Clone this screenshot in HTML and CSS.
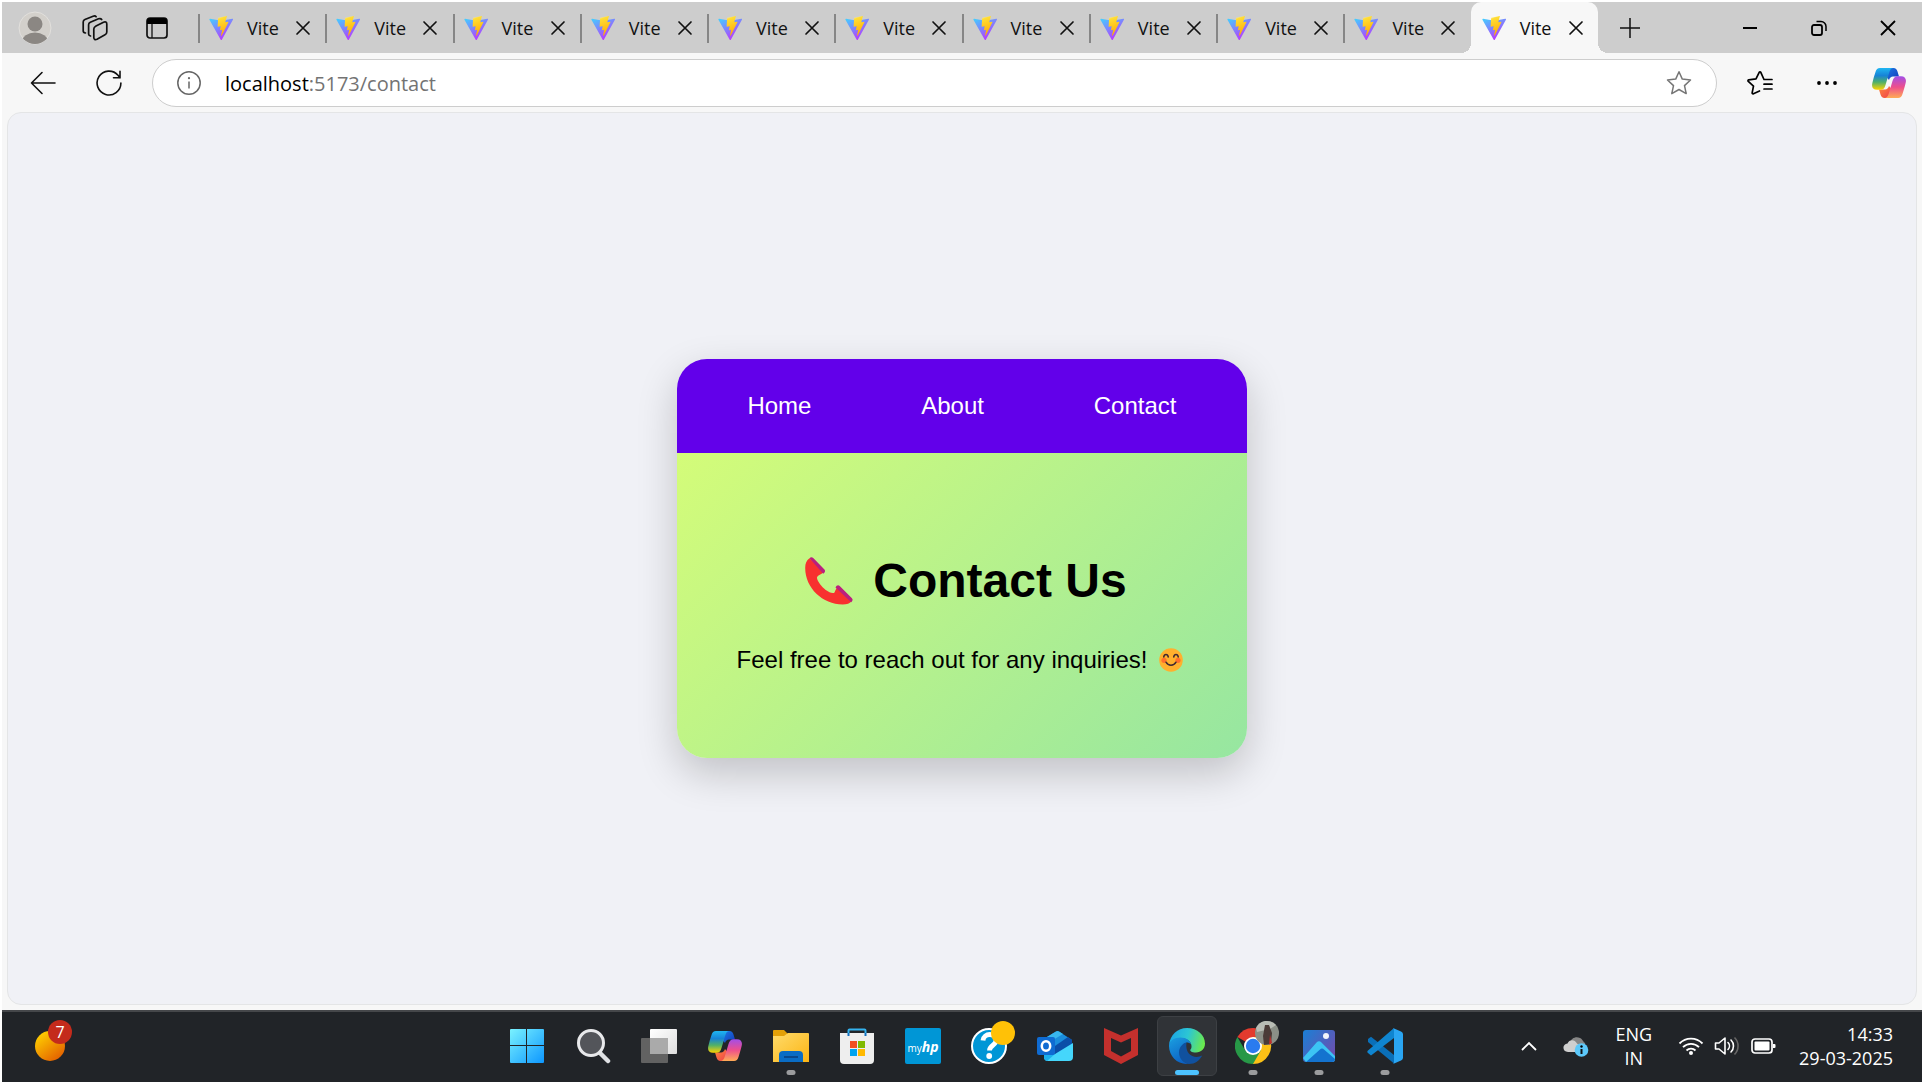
FILE: index.html
```html
<!DOCTYPE html>
<html lang="en">
<head>
<meta charset="utf-8">
<title>Vite + React</title>
<link rel="stylesheet" href="styles.css">
</head>
<body>
<svg class="defs" aria-hidden="true">
  <defs>
    <linearGradient id="viteA" x1="0" y1="0" x2="0.6" y2="1"><stop offset="0" stop-color="#41d1ff"/><stop offset="1" stop-color="#bd34fe"/></linearGradient>
    <linearGradient id="viteB" x1="0.4" y1="0" x2="0.6" y2="1"><stop offset="0" stop-color="#ffea83"/><stop offset="0.1" stop-color="#ffdd35"/><stop offset="1" stop-color="#ffa800"/></linearGradient>
    <linearGradient id="copA" x1="0" y1="0" x2="0" y2="1"><stop offset="0" stop-color="#1fb6f2"/><stop offset="0.35" stop-color="#1783d6"/><stop offset="0.65" stop-color="#4fb069"/><stop offset="1" stop-color="#ffd400"/></linearGradient>
    <linearGradient id="copB" x1="0" y1="0" x2="0" y2="1"><stop offset="0" stop-color="#a24ee8"/><stop offset="0.5" stop-color="#ee4f8c"/><stop offset="1" stop-color="#ffac55"/></linearGradient>
    <linearGradient id="copC" x1="0" y1="0" x2="1" y2="1"><stop offset="0" stop-color="#1d7be6"/><stop offset="1" stop-color="#1238b8"/></linearGradient>
    <linearGradient id="copD" x1="0" y1="0" x2="1" y2="1"><stop offset="0" stop-color="#ff8a3c"/><stop offset="1" stop-color="#ee3f4a"/></linearGradient>
    <symbol id="vite" viewBox="0 0 32 32">
      <path fill="url(#viteA)" d="M31.9 5.1 17.1 31.5c-.3.6-1.1.6-1.5 0L.6 5.1C.2 4.5.8 3.700 1.500 3.800l14.800 2.600h.3L31 3.800c.8-.1 1.300.6.9 1.300z"/>
      <path fill="url(#viteB)" d="m23.500.100-10.900 2.100c-.2 0-.3.200-.4.400l-.7 11.300c0 .300.200.500.500.400l3-.700c.300-.1.600.200.500.500l-.9 4.400c-.1.300.2.600.5.500l1.900-.6c.3-.1.600.200.500.500l-1.400 6.900c-.1.400.500.700.700.300l.2-.2 8.900-17.700c.1-.3-.1-.600-.5-.600l-3.100.6c-.3.100-.5-.2-.5-.5l2-7.100c.1-.300-.1-.600-.5-.500z"/>
    </symbol>
    <symbol id="copilot" viewBox="0 0 34 30">
      <path fill="url(#copC)" d="M17 0h4.500c2.200 0 3.300 1.200 4 3.500L27 8.500h-6c-2 0-3.300 1.200-4 3.500L14.500 9z"/>
      <path fill="url(#copD)" d="M17 30h-4.500c-2.200 0-3.300-1.200-4-3.500L7 21.500h6c2 0 3.300-1.200 4-3.500l2.500 3z"/>
      <path fill="url(#copA)" d="M8 0h13.500c-2.200 0-3.400 1.500-4.200 4.200L13.500 17c-1 3.300-2.300 4.800-5.200 4.800H5c-4 0-5.600-2.600-4.700-6.600C1.300 11 2.300 7.500 3.500 4 4.300 1.300 5.500 0 8 0z"/>
      <path fill="url(#copB)" d="M26 30H12.500c2.200 0 3.400-1.500 4.200-4.200L20.500 13c1-3.300 2.300-4.800 5.200-4.800H29c4 0 5.600 2.600 4.700 6.600-1 4.200-2 7.700-3.200 11.200-.8 2.700-2 4-4.500 4z"/>
    </symbol>
    <symbol id="cross" viewBox="0 0 16 16"><path fill="none" stroke="currentColor" stroke-width="1.700" stroke-linecap="round" d="M2 2l12 12M14 2 2 14"/></symbol>
  </defs>
</svg>

<header class="tabstrip">
  <div class="tools">
    <button class="plain" aria-label="Profile"><svg width="34" height="34" viewBox="0 0 34 34"><defs><clipPath id="av"><circle cx="17" cy="17" r="16"/></clipPath></defs><circle cx="17" cy="17" r="16" fill="#d3d0cb" stroke="#e2e0dd"/><g fill="#8b8783" clip-path="url(#av)"><circle cx="17" cy="13" r="7.500"/><ellipse cx="17" cy="31" rx="13" ry="9.500"/></g></svg></button>
    <button class="plain" aria-label="Workspaces"><svg width="26" height="26" viewBox="0 0 26 26" fill="none" stroke="#111" stroke-width="1.700" stroke-linecap="round" stroke-linejoin="round"><path d="M14 11l7.500-3.800c1.800-.8 3.300-.1 3.300 1.700V17c0 1.400-.6 2.200-1.800 2.800l-8 4.400c-1.900.9-3.200.2-3.200-1.600V14c0-1.500.8-2.200 2.200-3z"/><path d="M8.500 21c-1.300-.3-1.900-.9-1.900-2V9.800c0-1.300.6-2 1.700-2.500l8.200-3.500c1.300-.5 2.500-.3 3.200.7"/><path d="M3.500 18c-1.500-.2-2.300-.9-2.300-2V7c0-1.300.6-2 1.700-2.500l8.200-3.300c1.300-.5 2.500-.2 3 .5"/></svg></button>
    <button class="plain" aria-label="Tab actions"><svg width="22" height="22" viewBox="0 0 22 22"><rect x="1" y="1" width="20" height="20" rx="3" fill="none" stroke="#111" stroke-width="1.700"/><path d="M1 7V4a3 3 0 0 1 3-3h14a3 3 0 0 1 3 3v3z"/><path d="M6 7v14" stroke="#111" stroke-width="1.300"/></svg></button>
  </div>
  <div class="tabs" role="tablist">
    <div class="tab"><svg class="fav"><use href="#vite"/></svg><span>Vite</span><button class="plain" aria-label="Close tab"><svg class="x"><use href="#cross"/></svg></button></div>
    <div class="tab"><svg class="fav"><use href="#vite"/></svg><span>Vite</span><button class="plain" aria-label="Close tab"><svg class="x"><use href="#cross"/></svg></button></div>
    <div class="tab"><svg class="fav"><use href="#vite"/></svg><span>Vite</span><button class="plain" aria-label="Close tab"><svg class="x"><use href="#cross"/></svg></button></div>
    <div class="tab"><svg class="fav"><use href="#vite"/></svg><span>Vite</span><button class="plain" aria-label="Close tab"><svg class="x"><use href="#cross"/></svg></button></div>
    <div class="tab"><svg class="fav"><use href="#vite"/></svg><span>Vite</span><button class="plain" aria-label="Close tab"><svg class="x"><use href="#cross"/></svg></button></div>
    <div class="tab"><svg class="fav"><use href="#vite"/></svg><span>Vite</span><button class="plain" aria-label="Close tab"><svg class="x"><use href="#cross"/></svg></button></div>
    <div class="tab"><svg class="fav"><use href="#vite"/></svg><span>Vite</span><button class="plain" aria-label="Close tab"><svg class="x"><use href="#cross"/></svg></button></div>
    <div class="tab"><svg class="fav"><use href="#vite"/></svg><span>Vite</span><button class="plain" aria-label="Close tab"><svg class="x"><use href="#cross"/></svg></button></div>
    <div class="tab"><svg class="fav"><use href="#vite"/></svg><span>Vite</span><button class="plain" aria-label="Close tab"><svg class="x"><use href="#cross"/></svg></button></div>
    <div class="tab"><svg class="fav"><use href="#vite"/></svg><span>Vite</span><button class="plain" aria-label="Close tab"><svg class="x"><use href="#cross"/></svg></button></div>
    <div class="tab active"><svg class="fav"><use href="#vite"/></svg><span>Vite</span><button class="plain" aria-label="Close tab"><svg class="x"><use href="#cross"/></svg></button></div>
  </div>
  <button class="plain newtab" aria-label="New tab"><svg width="22" height="22" viewBox="0 0 22 22"><path d="M11 1v20M1 11h20" stroke="#111" stroke-width="1.500"/></svg></button>
  <div class="window-controls">
    <button class="plain" aria-label="Minimize"><svg width="16" height="16" viewBox="0 0 16 16"><path d="M1 8h14" stroke="#000" stroke-width="2"/></svg></button>
    <button class="plain" aria-label="Restore"><svg width="16" height="16" viewBox="0 0 16 16" fill="none" stroke="#000" stroke-width="1.800"><rect x="1" y="5" width="10" height="10" rx="2"/><path d="M5.500 1.500H10a5 5 0 0 1 5 5V11" stroke-width="1.500"/></svg></button>
    <button class="plain" aria-label="Close"><svg width="16" height="16" viewBox="0 0 16 16"><path d="M1 1l14 14M15 1 1 15" stroke="#000" stroke-width="1.800"/></svg></button>
  </div>
</header>

<div class="toolbar">
  <button class="plain back" aria-label="Back"><svg width="26" height="24" viewBox="0 0 26 24" fill="none" stroke="#111" stroke-width="1.600" stroke-linecap="round" stroke-linejoin="round"><path d="M25 12H1.500M12 1.500 1.500 12 12 22.500"/></svg></button>
  <button class="plain" aria-label="Refresh"><svg width="26" height="26" viewBox="0 0 26 26" fill="none" stroke="#111" stroke-width="1.600" stroke-linecap="round" stroke-linejoin="round"><path d="M24.900 13A11.900 11.900 0 1 1 22 5.200l2 2.600M24 1.200v6.600h-6.500"/></svg></button>
  <div class="address">
    <svg width="24" height="24" viewBox="0 0 24 24"><circle cx="12" cy="12" r="11.200" fill="none" stroke="#666" stroke-width="1.500"/><path d="M12 10.500V17.500" stroke="#666" stroke-width="1.500"/><circle cx="12" cy="7.200" r="1.100" fill="#666"/></svg>
    <a class="url" href="#">localhost<span>:5173/contact</span></a>
    <button class="plain" aria-label="Add to favorites"><svg width="26" height="26" viewBox="0 0 26 26" fill="none" stroke="#767676" stroke-width="1.500" stroke-linejoin="round"><path d="M13 1.800l3.300 7.300 8.200.9-6 5.600 1.700 8L13 19.500l-7.200 4.100 1.700-8-6-5.600 8.200-.9z"/></svg></button>
  </div>
  <div class="actions">
    <button class="plain" aria-label="Favorites"><svg width="26" height="24" viewBox="0 0 26 24" fill="none" stroke="#000" stroke-width="1.700" stroke-linejoin="round" stroke-linecap="round"><path d="M25 8.500h-8L13.800 1.300a1 1 0 0 0-1.600 0L9 7.800l-7.200 1c-.8.100-1.100 1-.5 1.600l5.200 4.800-1.300 6.500c-.2.900.5 1.400 1.200 1L12.500 20M17 13.200h8M17 18h8"/></svg></button>
    <button class="plain more" aria-label="Settings and more"><svg width="20" height="4" viewBox="0 0 20 4"><circle cx="2" cy="2" r="1.900"/><circle cx="10" cy="2" r="1.900"/><circle cx="18" cy="2" r="1.900"/></svg></button>
    <button class="plain" aria-label="Copilot"><svg width="34" height="30"><use href="#copilot"/></svg></button>
  </div>
</div>

<main class="page">
  <div class="viewport">
    <section class="card">
      <nav class="nav"><a href="#">Home</a><a href="#">About</a><a href="#">Contact</a></nav>
      <div class="content">
        <h1><svg width="48" height="48" viewBox="0 0 48 48" role="img" aria-label="telephone receiver"><path fill="#f8312f" d="M4.500 1.300C1.500 3.500.2 6.500.2 11c0 20 17.500 36.500 37.500 36.500 4 0 7.300-1 9.300-4L33 29.200c-1.700 2-2.200 3.200-3.500 6.300-1 1-3.500.5-5-.3-5.500-2.700-9-6.500-11.500-11.200-1.500-2.800-1.300-4.500.5-5.500 2.500-1.300 4-2 5.500-4z"/><path fill="#ba1f7e" d="M4.500 1.300c1.300-1.500 2.700-1.200 4 0l10.700 10.900c1.400 1.400 1 3.200-1 4.500zM30.500 30.500c1.100-2.300 2.700-3 4.200-1.500l12 12c1.500 1.500 1 3-.5 4.300z"/></svg><span>Contact Us</span></h1>
        <p><span>Feel free to reach out for any inquiries!</span><svg width="24" height="24" viewBox="0 0 24 24" role="img" aria-label="smiling face"><circle cx="12" cy="12" r="11.800" fill="#ffb02e"/><circle cx="5" cy="12.300" r="2.600" fill="#ff6f2d"/><circle cx="19" cy="12.300" r="2.600" fill="#ff6f2d"/><path d="M4.700 9c.6-3.200 4-3.200 4.600 0M14.700 9c.6-3.200 4-3.200 4.600 0M7 14.200c2.200 4 7.800 4 10 0" fill="none" stroke="#402a32" stroke-width="1.500" stroke-linecap="round"/></svg></p>
      </div>
    </section>
  </div>
</main>

<footer class="taskbar">
  <button class="plain widgets" aria-label="Widgets, 7 updates"><svg width="32" height="32" viewBox="0 0 32 32"><defs><linearGradient id="sun" x1="0.1" y1="0.100" x2="0.8" y2="1"><stop offset="0" stop-color="#ffd000"/><stop offset="1" stop-color="#e25c00"/></linearGradient></defs><circle cx="16" cy="16" r="15" fill="url(#sun)"/></svg><span class="badge">7</span></button>
  <div class="apps">
    <button class="app" aria-label="Start"><svg width="36" height="36" viewBox="0 0 36 36"><defs><linearGradient id="win" gradientUnits="userSpaceOnUse" x1="0" y1="0" x2="36" y2="36"><stop offset="0" stop-color="#7df5ff"/><stop offset="1" stop-color="#0a94ff"/></linearGradient></defs><path fill="url(#win)" d="M2 1h15v16H1V2a1 1 0 0 1 1-1zM18 1h16a1 1 0 0 1 1 1v15H18zM1 18h16v17H2a1 1 0 0 1-1-1zM18 18h17v16a1 1 0 0 1-1 1H18z"/></svg></button>
    <button class="app" aria-label="Search"><svg width="36" height="36" viewBox="0 0 36 36"><path d="M25 25l8 8" stroke="#dfe1e4" stroke-width="4.500" stroke-linecap="round"/><circle cx="16" cy="15" r="12.500" fill="#53555a" stroke="#e8e9eb" stroke-width="3"/></svg></button>
    <button class="app" aria-label="Task view"><svg width="38" height="36" viewBox="0 0 38 36"><defs><linearGradient id="tv" x1="0" y1="0" x2="1" y2="1"><stop offset="0" stop-color="#fff"/><stop offset="1" stop-color="#dedede"/></linearGradient></defs><rect x="10" y="1" width="27" height="25" rx="1" fill="url(#tv)"/><rect x="1" y="10" width="27" height="25" rx="1" fill="#626262"/><path d="M10 10h18v16H10z" fill="#aaa"/></svg></button>
    <button class="app" aria-label="Copilot"><svg width="34" height="30"><use href="#copilot"/></svg></button>
    <button class="app running" aria-label="File Explorer"><svg width="36" height="36" viewBox="0 0 36 36"><defs><linearGradient id="fold" x1="0" y1="0" x2="1" y2="1"><stop offset="0" stop-color="#ffdb6b"/><stop offset="1" stop-color="#fcb514"/></linearGradient></defs><path fill="#e3a008" d="M0 3a1 1 0 0 1 1-1h10l4 4v4H0z"/><path fill="url(#fold)" d="M0 8h11l4-3h20a1 1 0 0 1 1 1v28H0z"/><path fill="#0a6cc4" d="M6 34V27a4 4 0 0 1 4-4h16a4 4 0 0 1 4 4v7z"/><path d="M11 29h14" stroke="#0b3d78" stroke-width="1.500"/></svg></button>
    <button class="app" aria-label="Microsoft Store"><svg width="36" height="36" viewBox="0 0 36 36"><path d="M9.500 7V2.500a1 1 0 0 1 1-1h15a1 1 0 0 1 1 1V7" fill="none" stroke="#35b3ef" stroke-width="2"/><path fill="#eee" d="M1 5h34v27a4 4 0 0 1-4 4H5a4 4 0 0 1-4-4z"/><path d="M9.500 5v3M26.500 5v3" stroke="#0f6fc0" stroke-width="2"/><path fill="#f25022" d="M11 13h7v7h-7z"/><path fill="#7fba00" d="M19 13h7v7h-7z"/><path fill="#00a4ef" d="M11 21h7v7h-7z"/><path fill="#ffb900" d="M19 21h7v7h-7z"/></svg></button>
    <button class="app" aria-label="myHP"><span class="myhp">my<b>hp</b></span></button>
    <button class="app" aria-label="HP Support"><svg class="help" width="44" height="44" viewBox="0 0 44 44"><circle cx="18" cy="26" r="17" fill="#0096d6" stroke="#fff" stroke-width="2"/><path d="M12 20.500c.5-8 13-8 13 0 0 5-6.500 4.500-6.500 10" fill="none" stroke="#fff" stroke-width="4.800"/><circle cx="18.200" cy="36" r="2.900" fill="#fff"/><circle cx="32" cy="13" r="12" fill="#ffc107"/></svg></button>
    <button class="app" aria-label="Outlook"><svg width="38" height="36" viewBox="0 0 38 36"><path fill="#1a8ddc" d="M6 12 20 3.500a3 3 0 0 1 3 0L36 12v9H6z"/><path fill="#38b6ee" d="M6 12 20 3.500a3 3 0 0 1 3 0L27 6 12 15z"/><path fill="#0b4ea8" d="m16 20 16-11 4 3v6L20 27z"/><path fill="#45d6fb" d="M8 21l11 5 18-11v14a4 4 0 0 1-4 4H12a4 4 0 0 1-4-4z"/><path fill="#1bb0ee" d="M8 21l11 5-8 7a4 4 0 0 1-3-4z"/><rect x="1" y="9" width="18" height="18" rx="2" fill="#0f6bd2"/><ellipse cx="10" cy="18" rx="4.200" ry="4.800" fill="none" stroke="#fff" stroke-width="2.500"/></svg></button>
    <button class="app" aria-label="McAfee"><svg width="34" height="36" viewBox="0 0 34 36"><path fill="#c4302d" fill-rule="evenodd" d="M0 0l17 7.500L34 0v27l-17 9-17-9zM7 10v13l10 5.500L27 23V10l-10 4.500z"/></svg></button>
    <button class="app running current" aria-label="Microsoft Edge"><svg width="36" height="36" viewBox="0 0 36 36"><defs><linearGradient id="edA" x1="0" y1="0.3" x2="1" y2="0.5"><stop offset="0" stop-color="#1ba4e6"/><stop offset="0.5" stop-color="#2cc6d4"/><stop offset="1" stop-color="#6bea4c"/></linearGradient><linearGradient id="edB" x1="0" y1="0" x2="0.5" y2="1"><stop offset="0" stop-color="#1b9fe0"/><stop offset="1" stop-color="#0c62c4"/></linearGradient></defs><path fill="url(#edA)" d="M0 17C1 7 8.500 0 18 0c10.500 0 18 7.200 18 15.500 0 5.500-4 9-9 9-4.500 0-6.500-1.500-5.500-3 1-1.200 1-2 1-3.500 0-4-4.500-8-10.500-8C6 10 1.500 13 0 17z"/><path fill="url(#edB)" d="M0 18C0 12.500 5.500 9.500 11.500 9.500c5.500 0 10 3.300 10.800 7-1.300-1.500-3-2-4.800-2-4 2-6.500 6-6.500 10 0 6 4.500 10.500 8.500 11.400C9 37 0 28.500 0 18z"/><path fill="#10519f" d="M17.500 14.500c-4.500 1-7.500 5.500-7.500 10 0 6.500 5.500 11.500 10 11.500 6 0 10.500-3.500 13.200-8.500-6.200 3.500-17.700 1-15.700-13z"/></svg></button>
    <button class="app running" aria-label="Google Chrome"><svg class="chrome" width="44" height="44" viewBox="0 0 44 44"><path fill="#e33b2e" d="M18 26 2.400 17A18 18 0 0 1 33.600 17z"/><path fill="#fbc116" d="M18 26V17h15.600A18 18 0 0 1 18 44z"/><path fill="#279847" d="M18 26l7.800 4.500L18 44A18 18 0 0 1 2.400 17l7.800 13.500z"/><circle cx="18" cy="26" r="9" fill="#fff"/><circle cx="18" cy="26" r="7.200" fill="#2a7bef"/><circle cx="32" cy="13" r="12" fill="#8b9087"/><path fill="#b9bdb5" d="M21 8a12 12 0 0 1 20-3L35 9l-13 3z"/><path fill="#4a3b37" d="M30 5h4l3 8-1 11-7 1-1-9z"/><path fill="#bd2f2d" d="M35 15l2 8-3 1.500z"/></svg></button>
    <button class="app running" aria-label="Photos"><svg width="32" height="32" viewBox="0 0 32 32"><defs><linearGradient id="ph" x1="0" y1="0" x2="1" y2="0.7"><stop offset="0" stop-color="#1a80d6"/><stop offset="1" stop-color="#6a50b0"/></linearGradient></defs><rect width="32" height="32" rx="3" fill="url(#ph)"/><path fill="#3cc4f4" d="M0 28 13.500 12.500a3.500 3.500 0 0 1 5 0L32 26v3a3 3 0 0 1-3 3H3z"/><path fill="#1473cf" d="M3 32 17 19.500a3 3 0 0 1 4 0L32 29a3 3 0 0 1-3 3z"/><circle cx="23" cy="6" r="3" fill="#f2f4fa"/></svg></button>
    <button class="app running" aria-label="Visual Studio Code"><svg width="36" height="36" viewBox="0 0 36 36"><path fill="#0a6fb8" d="M1 11l3-2.300L27 27v8.500L1 14z"/><path fill="#0f85d0" d="M27 0v10L4 27.500 1 25a1.500 1.500 0 0 1 0-2.500z"/><path fill="#2aa5f2" d="M26 0l8 3.500a3 3 0 0 1 2 2.500v24a3 3 0 0 1-2 2.500L26 36c.8-.5 1-1 1-2V2c0-1-.2-1.500-1-2z"/></svg></button>
  </div>
  <div class="tray">
    <button class="plain" aria-label="Show hidden icons"><svg width="16" height="10" viewBox="0 0 16 10"><path d="M1 9l7-7 7 7" fill="none" stroke="#fff" stroke-width="1.800"/></svg></button>
    <button class="plain cloud" aria-label="OneDrive"><svg width="26" height="22" viewBox="0 0 26 22"><path fill="#868686" d="M7 8c1-5 6-7 10-5 3 1.500 3 4 5 5l1 6H9z"/><path fill="#cfcfcf" d="M5 17c-6 0-6-8-.5-8.500C6 4 12 4 14 8.500l6 5.500v3z"/><circle cx="18.500" cy="15" r="6.800" fill="#5cc8fa"/><path d="M18.500 14v5" stroke="#111" stroke-width="2"/><circle cx="18.500" cy="11.500" r="1.200"/></svg></button>
    <button class="plain lang">ENG<br>IN</button>
    <button class="plain status" aria-label="Network, volume and battery">
      <svg width="26" height="20" viewBox="0 0 26 20" fill="none" stroke="#fff" stroke-width="1.800"><path d="M1.500 7.500a16 16 0 0 1 23 0M5 11.200a11.300 11.300 0 0 1 16 0M8.500 14.500a6.500 6.500 0 0 1 9 0"/><circle cx="13" cy="17" r="2" fill="#fff" stroke="none"/></svg>
      <svg width="26" height="20" viewBox="0 0 26 20" fill="none" stroke="#fff" stroke-width="1.600" stroke-linejoin="round"><path d="M1.500 7H5l6-5v16l-6-5H1.500z"/><path d="M14 6.500a5 5 0 0 1 0 7M17 4a8.500 8.500 0 0 1 0 12" stroke-linecap="round"/><path d="M20.500 1.500a12 12 0 0 1 0 17" stroke="#666"/></svg>
      <svg width="26" height="20" viewBox="0 0 26 20"><rect x="2" y="3" width="20" height="14" rx="3" fill="none" stroke="#fff" stroke-width="1.700"/><rect x="4.500" y="5.500" width="15" height="9" rx="1" fill="#fff"/><path d="M23 8h1.500a1 1 0 0 1 1 1v2a1 1 0 0 1-1 1H23z" fill="#fff"/></svg>
    </button>
    <button class="plain clock"><time datetime="2025-03-29T14:33">14:33<br>29-03-2025</time></button>
  </div>
</footer>
</body>
</html>
```
FILE: styles.css
```css
* { box-sizing: border-box; }

body {
  margin: 0;
  min-height: 100vh;
  padding: 2px;
  background: #fff;
  display: grid;
  grid-template-rows: auto auto 1fr auto;
  font-family: "Open Sans", "Noto Sans", sans-serif;
  font-size: 18px;
  color: #111;
}

svg { display: block; flex: none; }
.defs { position: absolute; width: 0; height: 0; }

button { font: inherit; color: inherit; }
.plain { display: block; border: 0; padding: 0; background: none; }
a { color: inherit; text-decoration: none; }

/* Tab strip */
.tabstrip {
  display: flex;
  align-items: center;
  height: 51px;
  background: #cdcdcd;
}
.tools {
  display: grid;
  grid-template-columns: 64px 64px auto;
  align-items: center;
  width: 196px;
  padding-left: 16px;
}
.tabs {
  display: flex;
  flex: 0 1 1400px;
  height: 100%;
}
.tab {
  display: flex;
  align-items: center;
  flex: 1;
  padding-left: 11px;
  position: relative;
}
.tab::before {
  content: "";
  position: absolute;
  left: 0;
  top: 12px;
  height: 29px;
  width: 2px;
  background: #868686;
}
.tab span { width: 62px; padding-left: 14px; }
.tab .fav { width: 24px; height: 24px; }
.tab .x { width: 16px; height: 16px; }
.active {
  background: #f7f7f7;
  border-radius: 10px 10px 0 0;
}
.active::before,
.active::after {
  content: "";
  position: absolute;
  top: auto;
  bottom: 0;
  width: 10px;
  height: 10px;
}
.active::before {
  left: -10px;
  background: radial-gradient(circle at 0 0, #cdcdcd 10px, #f7f7f7 10px);
}
.active::after {
  right: -10px;
  background: radial-gradient(circle at 100% 0, #cdcdcd 10px, #f7f7f7 10px);
}
.newtab { margin-left: 21px; }
.window-controls {
  display: flex;
  gap: 53px;
  margin-left: auto;
  padding-right: 26px;
}

/* Toolbar */
.toolbar {
  display: flex;
  align-items: center;
  padding: 6px 16px 5px 28px;
  gap: 30px;
  background: #f7f7f7;
}
.back { margin-right: 10px; }
.address {
  display: flex;
  align-items: center;
  flex: 1;
  height: 48px;
  padding: 0 24px;
  border: 1px solid #cdcdcd;
  border-radius: 24px;
  background: #fff;
}
.url {
  flex: 1;
  padding-left: 24px;
  font-size: 20px;
  color: #000;
}
.url span { color: #737373; }
.actions {
  display: flex;
  align-items: center;
}
.more { margin: 0 35px 0 44px; }

/* Page area */
.page {
  display: grid;
  padding: 0 5px 5px;
  background: #f7f7f7;
}
.viewport {
  display: grid;
  place-items: center;
  background: #f0f1f6;
  border: 1px solid #e4e5e6;
  border-radius: 14px;
}
.card {
  border-radius: 30px;
  overflow: hidden;
  font-family: "Liberation Sans", Arial, sans-serif;
  font-size: 24px;
  color: #000;
  box-shadow: 0 15px 40px rgba(0, 0, 0, 0.2);
}
.nav {
  display: flex;
  justify-content: space-around;
  padding: 32px 16px;
  line-height: 30px;
  background: #6200ea;
  color: #fff;
}
.content {
  padding: 96px 60px 82px;
  background: linear-gradient(135deg, #d4fc79, #96e6a1);
}
.content h1,
.content p {
  display: flex;
  align-items: center;
  justify-content: center;
  margin: 0;
}
.content h1 {
  gap: 20px;
  margin-bottom: 31px;
  padding-left: 8px;
  font-size: 48px;
  line-height: 64px;
}
.content p {
  gap: 12px;
  padding-right: 4px;
  line-height: 32px;
}

/* Taskbar */
.taskbar {
  display: grid;
  grid-template-columns: 1fr auto 1fr;
  align-items: center;
  height: 72px;
  padding-bottom: 2px;
  border-top: 2px solid #45474a;
  background: #212428;
  color: #fff;
}
.widgets {
  justify-self: start;
  position: relative;
  margin-left: 32px;
}
.badge {
  position: absolute;
  left: 14px;
  top: -10px;
  width: 24px;
  height: 24px;
  border-radius: 50%;
  background: #c42b1c;
  font-size: 16px;
  line-height: 24px;
  text-align: center;
}
.apps {
  display: flex;
  gap: 6px;
  margin-right: 12px;
}
.app {
  display: grid;
  place-items: center;
  position: relative;
  width: 60px;
  height: 60px;
  padding: 0;
  border: 1px solid transparent;
  border-radius: 6px;
  background: none;
}
.current {
  border-color: #3d4044;
  background: #303337;
}
.running::after {
  content: "";
  position: absolute;
  left: 50%;
  bottom: 0;
  width: 9px;
  height: 5px;
  border-radius: 3px;
  background: #9b9c9e;
  transform: translateX(-50%);
}
.current::after {
  width: 24px;
  background: #4cc2ff;
}
.help, .chrome { margin: -8px -8px 0 0; }
.myhp {
  display: grid;
  grid-auto-flow: column;
  place-content: center;
  align-items: baseline;
  width: 36px;
  height: 36px;
  border-radius: 2px;
  background: #0096d6;
  color: #fff;
  font-size: 10px;
}
.myhp b { font-size: 14px; font-style: italic; }
.tray {
  display: flex;
  align-items: center;
  justify-self: end;
  padding-right: 29px;
  line-height: 24px;
}
.cloud { margin-left: 26px; }
.lang { margin-left: 26px; text-align: center; }
.status {
  display: flex;
  gap: 10px;
  margin-left: 26px;
}
.clock { margin-left: 23px; text-align: right; }
```
